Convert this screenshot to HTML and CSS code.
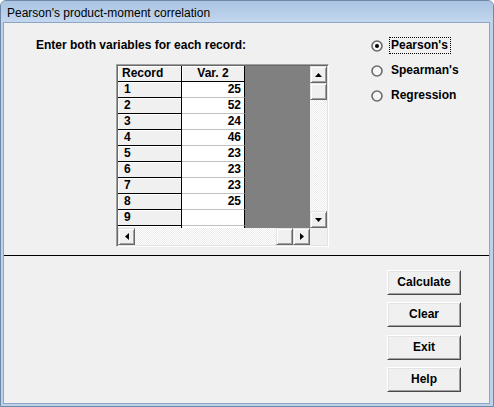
FILE: index.html
```html
<!DOCTYPE html>
<html>
<head>
<meta charset="utf-8">
<title>Pearson's product-moment correlation</title>
<link rel="stylesheet" href="styles.css">
</head>
<body>
<div class="window">
  <div class="titlebar">Pearson's product-moment correlation</div>
  <div class="frame">
    <div class="client">
      <div class="top">
        <div class="left">
          <div class="prompt">Enter both variables for each record:</div>
          <div class="gridbox">
            <div class="gridmain">
              <div class="cells">
                <div class="col col-fixed">
                  <div class="cell fixed head">Record</div>
                  <div class="cell fixed num">1</div>
                  <div class="cell fixed num">2</div>
                  <div class="cell fixed num">3</div>
                  <div class="cell fixed num">4</div>
                  <div class="cell fixed num">5</div>
                  <div class="cell fixed num">6</div>
                  <div class="cell fixed num">7</div>
                  <div class="cell fixed num">8</div>
                  <div class="cell fixed num">9</div>
                  <div class="cell fixed num"></div>
                </div>
                <div class="col col-data">
                  <div class="cell fixed head center">Var. 2</div>
                  <div class="cell data">25</div>
                  <div class="cell data">52</div>
                  <div class="cell data">24</div>
                  <div class="cell data">46</div>
                  <div class="cell data">23</div>
                  <div class="cell data">23</div>
                  <div class="cell data">23</div>
                  <div class="cell data">25</div>
                  <div class="cell data"></div>
                  <div class="cell data"></div>
                </div>
                <div class="col col-empty"></div>
              </div>
              <div class="vscroll">
                <div class="sbtn"><svg width="7" height="4" viewBox="0 0 7 4"><polygon points="3.5,0 7,4 0,4" fill="#000"/></svg></div>
                <div class="sbtn"></div>
                <div class="track"></div>
                <div class="sbtn"><svg width="7" height="4" viewBox="0 0 7 4"><polygon points="0,0 7,0 3.5,4" fill="#000"/></svg></div>
              </div>
            </div>
            <div class="hrow">
              <div class="hscroll">
                <div class="sbtn"><svg width="4" height="7" viewBox="0 0 4 7"><polygon points="4,0 4,7 0,3.5" fill="#000"/></svg></div>
                <div class="track"></div>
                <div class="sbtn"></div>
                <div class="sbtn"><svg width="4" height="7" viewBox="0 0 4 7"><polygon points="0,0 4,3.5 0,7" fill="#000"/></svg></div>
              </div>
              <div class="corner"></div>
            </div>
          </div>
        </div>
        <div class="options">
          <div class="option">
            <svg class="radio" width="12" height="12" viewBox="0 0 12 12"><circle cx="6" cy="6" r="5" fill="#f7f7f7" stroke="#6a6a6a" stroke-width="1.6"/><circle cx="6" cy="6" r="2" fill="#000"/></svg>
            <span class="optlabel focus">Pearson's</span>
          </div>
          <div class="option">
            <svg class="radio" width="12" height="12" viewBox="0 0 12 12"><circle cx="6" cy="6" r="5" fill="#f7f7f7" stroke="#6a6a6a" stroke-width="1.6"/></svg>
            <span class="optlabel">Spearman's</span>
          </div>
          <div class="option">
            <svg class="radio" width="12" height="12" viewBox="0 0 12 12"><circle cx="6" cy="6" r="5" fill="#f7f7f7" stroke="#6a6a6a" stroke-width="1.6"/></svg>
            <span class="optlabel">Regression</span>
          </div>
        </div>
      </div>
      <div class="bottom">
        <div class="buttons">
          <div class="btn">Calculate</div>
          <div class="btn">Clear</div>
          <div class="btn">Exit</div>
          <div class="btn">Help</div>
        </div>
      </div>
    </div>
  </div>
</div>
</body>
</html>
```
FILE: styles.css
```css
body {
  margin: 0;
  background: #ffffff;
}

.window {
  width: 494px;
  height: 407px;
  box-sizing: border-box;
  border: 1px solid #6f88a8;
  border-radius: 6px 6px 0 0;
  background: #bcd2ea;
  display: flex;
  flex-direction: column;
  overflow: hidden;
  font-family: "Liberation Sans", Arial, sans-serif;
}

.titlebar {
  flex: none;
  height: 21px;
  box-sizing: border-box;
  padding: 3px 0 0 6px;
  line-height: 18px;
  font-size: 12px;
  color: #000;
  background: linear-gradient(#a9c3e1, #c3d7ee);
}

.frame {
  flex: 1;
  display: flex;
  padding: 0 3px 2px 2px;
}

.client {
  flex: 1;
  display: flex;
  flex-direction: column;
  border: 1px solid #8ea6c4;
  background: #f0f0f0;
  font-size: 12px;
  font-weight: bold;
  color: #000;
}

.top {
  flex: none;
  height: 232px;
  display: flex;
  border-bottom: 1px solid #000;
}

.left {
  width: 367px;
  box-sizing: border-box;
  padding-left: 32px;
}

.prompt {
  margin-top: 15px;
  line-height: 14px;
  white-space: nowrap;
}

.gridbox {
  margin-top: 12px;
  margin-left: 80px;
  width: 213px;
  box-sizing: border-box;
  border: 1px solid;
  border-color: #a0a0a0 #ffffff #ffffff #a0a0a0;
  padding: 1px;
  box-shadow: inset 1px 1px #696969, inset -1px -1px #e3e3e3;
}

.gridmain {
  display: flex;
  height: 162px;
}

.cells {
  width: 192px;
  display: flex;
  overflow: hidden;
}

.col {
  display: flex;
  flex-direction: column;
}

.col-fixed {
  width: 64px;
}

.col-data {
  width: 63px;
}

.col-empty {
  flex: 1;
  background: #808080;
}

.cell {
  flex: none;
  height: 16px;
  box-sizing: border-box;
  line-height: 15px;
  border-right: 1px solid #000;
  border-bottom: 1px solid #000;
  white-space: nowrap;
}

.fixed {
  background: #f0f0f0;
  box-shadow: inset 1px 1px #ffffff;
}

.head {
  padding-left: 4px;
}

.num {
  padding-left: 6px;
}

.center {
  text-align: center;
  padding-left: 0;
}

.data {
  background: #ffffff;
  border-bottom-color: #c0c0c0;
  text-align: right;
  padding-right: 3px;
}

.vscroll {
  width: 17px;
  display: flex;
  flex-direction: column;
}

.hrow {
  display: flex;
  height: 17px;
}

.hscroll {
  width: 192px;
  display: flex;
}

.corner {
  width: 17px;
  background: #f0f0f0;
}

.sbtn {
  flex: none;
  width: 17px;
  height: 17px;
  box-sizing: border-box;
  background: #f0f0f0;
  border: 1px solid;
  border-color: #e3e3e3 #696969 #696969 #e3e3e3;
  box-shadow: inset 1px 1px #ffffff, inset -1px -1px #a0a0a0;
  display: flex;
  align-items: center;
  justify-content: center;
}

.track {
  flex: 1;
  background: repeating-conic-gradient(#ffffff 0 25%, #ebebeb 0 50%) 0 0 / 2px 2px;
}

.options {
  flex: 1;
  padding-top: 14px;
  display: flex;
  flex-direction: column;
  gap: 8px;
}

.option {
  display: flex;
  align-items: center;
  height: 17px;
}

.radio {
  flex: none;
  margin-right: 6px;
}

.optlabel {
  box-sizing: border-box;
  height: 17px;
  line-height: 15px;
  padding: 0 2px 0 1px;
  border: 1px solid transparent;
  white-space: nowrap;
}

.optlabel.focus {
  border: 1px dotted #000;
}

.bottom {
  flex: 1;
}

.buttons {
  margin-left: 383px;
  padding-top: 14px;
  display: flex;
  flex-direction: column;
  gap: 7.3px;
}

.btn {
  width: 74px;
  height: 25px;
  box-sizing: border-box;
  border: 1px solid;
  border-color: #ffffff #4a4a4a #4a4a4a #ffffff;
  box-shadow: inset 1px 1px #e3e3e3, inset -1px -1px #a0a0a0;
  background: #f0f0f0;
  text-align: center;
  line-height: 22px;
}
```
